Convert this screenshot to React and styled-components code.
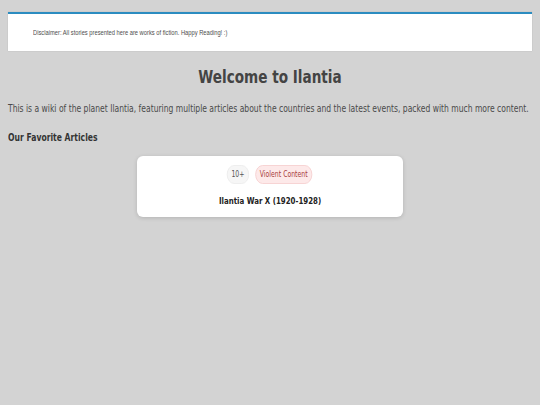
import styled, { createGlobalStyle } from "styled-components";

const GlobalStyle = createGlobalStyle`
  html, body {
    margin: 0;
    padding: 0;
    background: #d3d3d3;
  }
  body {
    font-family: "DejaVu Sans", sans-serif;
    color: #444;
  }
`;

const Page = styled.div`
  padding: 12px 8px;
  min-height: 405px;
  box-sizing: border-box;
`;

const Disclaimer = styled.div`
  background: #fff;
  border-top: 2px solid #2b8cc0;
  box-shadow: 0 0 1px rgba(0, 0, 0, 0.2);
  height: 37px;
  padding: 0 25px;
  display: flex;
  align-items: center;
`;

const DisclaimerText = styled.span`
  font-family: "Liberation Sans", Arial, sans-serif;
  font-size: 8px;
  color: #4d4d4d;
  transform: scaleX(0.72);
  transform-origin: left center;
  white-space: nowrap;
`;

/* narrow lettering: every text block is squeezed horizontally */
const Title = styled.h1`
  text-align: center;
  font-size: 17px;
  margin: 16px 0 16px;
  color: #444;
  transform: scaleX(0.8);
`;

const Intro = styled.p`
  font-size: 10px;
  margin: 0 0 17px;
  width: 100%;
  white-space: nowrap;
  color: #4a4a4a;
  transform: scaleX(0.762);
  transform-origin: left center;
`;

const SectionTitle = styled.h2`
  font-size: 10.5px;
  margin: 0 0 13px;
  color: #333;
  transform: scaleX(0.73);
  transform-origin: left center;
`;

const Cards = styled.div`
  display: flex;
  justify-content: center;
`;

const Card = styled.div`
  width: 266px;
  background: #fff;
  border-radius: 6px;
  box-shadow: 0 1px 4px rgba(0, 0, 0, 0.15);
  padding: 9px 0 11px;
  display: flex;
  flex-direction: column;
  align-items: center;
  gap: 11px;
`;

const Tags = styled.div`
  display: flex;
  gap: 8px;
  transform: scaleX(0.77);
`;

const Tag = styled.span`
  font-size: 8px;
  padding: 4px 5px;
  border-radius: 10px;
  line-height: 9px;
  border: 1px solid ${(p) => (p.$danger ? "#f6cfcf" : "#ececec")};
  background: ${(p) => (p.$danger ? "#fde9e9" : "#f6f6f6")};
  color: ${(p) => (p.$danger ? "#a83b3b" : "#555")};
`;

const CardTitle = styled.div`
  font-size: 9.5px;
  font-weight: bold;
  color: #222;
  transform: scaleX(0.74);
`;

export default function App() {
  return (
    <Page>
      <GlobalStyle />
      <Disclaimer>
        <DisclaimerText>
          Disclaimer: All stories presented here are works of fiction. Happy Reading! :)
        </DisclaimerText>
      </Disclaimer>
      <Title>Welcome to Ilantia</Title>
      <Intro>
        This is a wiki of the planet Ilantia, featuring multiple articles about the countries and the latest events, packed with much more content.
      </Intro>
      <SectionTitle>Our Favorite Articles</SectionTitle>
      <Cards>
        <Card>
          <Tags>
            <Tag>10+</Tag>
            <Tag $danger>Violent Content</Tag>
          </Tags>
          <CardTitle>Ilantia War X (1920-1928)</CardTitle>
        </Card>
      </Cards>
    </Page>
  );
}
